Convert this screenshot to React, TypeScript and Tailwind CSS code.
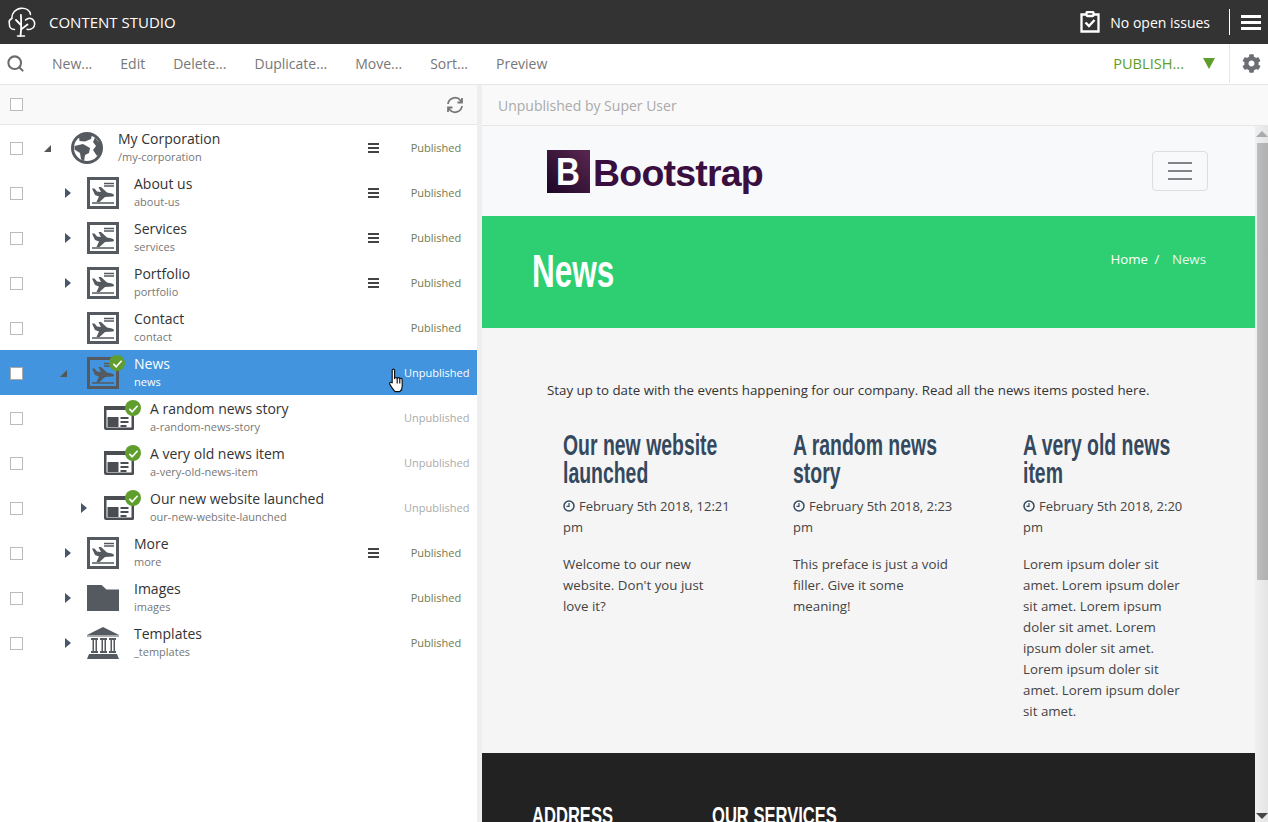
import React from 'react';
import { Search } from 'lucide-react';
import { FaCog } from 'react-icons/fa';

type RowKind = 'site' | 'globe' | 'article' | 'folder' | 'templates';

type Row = {
  name: string;
  path: string;
  level: number;
  kind: RowKind;
  expander?: 'open' | 'closed';
  menu?: boolean;
  status: 'Published' | 'Unpublished';
  badge?: boolean;
  selected?: boolean;
};

const rows: Row[] = [
  { name: 'My Corporation', path: '/my-corporation', level: 0, kind: 'globe', expander: 'open', menu: true, status: 'Published' },
  { name: 'About us', path: 'about-us', level: 1, kind: 'site', expander: 'closed', menu: true, status: 'Published' },
  { name: 'Services', path: 'services', level: 1, kind: 'site', expander: 'closed', menu: true, status: 'Published' },
  { name: 'Portfolio', path: 'portfolio', level: 1, kind: 'site', expander: 'closed', menu: true, status: 'Published' },
  { name: 'Contact', path: 'contact', level: 1, kind: 'site', status: 'Published' },
  { name: 'News', path: 'news', level: 1, kind: 'site', expander: 'open', status: 'Unpublished', badge: true, selected: true },
  { name: 'A random news story', path: 'a-random-news-story', level: 2, kind: 'article', status: 'Unpublished', badge: true },
  { name: 'A very old news item', path: 'a-very-old-news-item', level: 2, kind: 'article', status: 'Unpublished', badge: true },
  { name: 'Our new website launched', path: 'our-new-website-launched', level: 2, kind: 'article', expander: 'closed', status: 'Unpublished', badge: true },
  { name: 'More', path: 'more', level: 1, kind: 'site', expander: 'closed', menu: true, status: 'Published' },
  { name: 'Images', path: 'images', level: 1, kind: 'folder', expander: 'closed', status: 'Published' },
  { name: 'Templates', path: '_templates', level: 1, kind: 'templates', expander: 'closed', status: 'Published' },
];

const posts = [
  {
    title: 'Our new website launched',
    date: 'February 5th 2018, 12:21 pm',
    body: "Welcome to our new website. Don't you just love it?",
  },
  {
    title: 'A random news story',
    date: 'February 5th 2018, 2:23 pm',
    body: 'This preface is just a void filler. Give it some meaning!',
  },
  {
    title: 'A very old news item',
    date: 'February 5th 2018, 2:20 pm',
    body: 'Lorem ipsum doler sit amet. Lorem ipsum doler sit amet. Lorem ipsum doler sit amet. Lorem ipsum doler sit amet. Lorem ipsum doler sit amet. Lorem ipsum doler sit amet.',
  },
];

const TreeLogo = () => (
  <svg width="28" height="30" viewBox="0 0 28 30" fill="none" stroke="white" strokeWidth="1.500" strokeLinecap="round" strokeLinejoin="round">
    <path d="M6.500 22.500C3 22.500 1 20 1.500 17 .8 15 1.500 12.500 4 11.500 3.500 6.500 7.500 1.500 13.500 1.200c5-.2 8.500 2.500 9 6.300" />
    <path d="M17.500 13c2.500-2.500 6-2.500 7.800 0 2 2.500 1.800 6-.5 8-1.600 1.300-3.700 1.700-5.800 1.200" />
    <path d="M12.500 29c.8-6 .8-14 .4-21M12.900 18L8 13M13 22.500L19.500 17.500" strokeWidth="1.800" />
    <path d="M9.500 29h7" />
  </svg>
);

const ClipboardIcon = () => (
  <svg width="20" height="22" viewBox="0 0 20 22" fill="none" stroke="white" strokeWidth="2.300">
    <path d="M6 3.500H1.500v17h17v-17H14" />
    <rect x="6.500" y="1" width="7" height="4" rx="1" />
    <path d="M5.500 11.500l3.500 3.500 5.500-6" strokeWidth="2.400" />
  </svg>
);

const SiteIcon = () => (
  <svg width="32" height="32" viewBox="0 0 32 32" fill="none">
    <rect x="1.500" y="1.500" width="29" height="29" stroke="#555960" strokeWidth="3" />
    <path d="M17 6.500h10M17 9h10M5 26h22" stroke="#555960" strokeWidth="1.300" />
    <path d="M5 11.500L7.500 11.500 10 14.500 14 15 11.500 10H14L20 15.500 25 16.500Q28.500 18 26 19.500L18 20 12.500 25H9.500L12 19.500 8 18Z" fill="#555960" />
  </svg>
);

const GlobeIcon = () => (
  <svg width="32" height="32" viewBox="0 0 32 32" fill="#555960">
    <circle cx="16" cy="16" r="14.500" fill="white" stroke="#555960" strokeWidth="3" />
    <path d="M8 4.500L16 2l5 1-1 4-6 2.500L8.500 9Z" />
    <path d="M3.500 14L12 12l7 4-1 5-4 2-1 6.500-3-2.500-1-6-5.500-3.500Z" />
    <path d="M24 5.500L30 13v7l-4 4-4-6 3-4-3-4Z" />
  </svg>
);

const ArticleIcon = () => (
  <svg width="32" height="32" viewBox="0 0 32 32" fill="none">
    <path d="M1 4h30v22.500a1.500 1.500 0 0 1-1.500 1.500H3a2 2 0 0 1-2-2Z" fill="#4a4d52" />
    <rect x="3.500" y="8" width="25" height="17.500" fill="white" />
    <rect x="4.500" y="15" width="11" height="10" fill="#4a4d52" />
    <path d="M17.500 16h8M17.500 20h8M17.500 24h6" stroke="#4a4d52" strokeWidth="1.800" />
  </svg>
);

const FolderIcon = () => (
  <svg width="32" height="32" viewBox="0 0 32 32">
    <path d="M0 3h14.500L19.500 7.500H32V29H0Z" fill="#555960" />
  </svg>
);

const TemplatesIcon = () => (
  <svg width="34" height="32" viewBox="0 0 34 32" fill="#555960" className="-ml-[1px]">
    <path d="M17 0L33 8H1Z" />
    <path d="M1 9h32" stroke="#555960" strokeWidth="1" />
    <path d="M5 11h7v2H5ZM14 11h7v2h-7ZM23 11h7v2h-7ZM5 24h7v2H5ZM14 24h7v2h-7ZM23 24h7v2h-7Z" />
    <path d="M6.500 13h1.500v11H6.500ZM9.500 13h1.500v11H9.500ZM15.500 13h1.500v11h-1.500ZM18.500 13h1.500v11h-1.500ZM24.500 13h1.500v11h-1.500ZM27.500 13h1.500v11h-1.500Z" />
    <path d="M3 27h28l2 5H1Z" />
  </svg>
);

const Badge = () => (
  <span className="absolute -top-[2px] -right-[6px] flex h-[16px] w-[16px] items-center justify-center rounded-full bg-[#5f9e2c]">
    <svg width="11" height="11" viewBox="0 0 12 12" fill="none" stroke="white" strokeWidth="1.800">
      <path d="M1.500 6.500L4.500 9.500 10.500 3" />
    </svg>
  </span>
);

const HandCursor = () => (
  <svg className="absolute left-[387px] top-[18px]" width="20" height="26" viewBox="0 0 18 27" fill="white" stroke="#111" strokeWidth="1.200" strokeLinejoin="round">
    <path d="M4 2.500C4 .8 6.500 .8 6.500 2.500V11c.3-1.500 2.500-1.500 2.700 0 .3-1.300 2.500-1.300 2.700.3.400-1 2.400-.8 2.500 .7v7c0 2.500-1 4.500-2.400 5.500H7C5.500 23 3.500 20.500 1.500 17c-.8-1.800 1-3 2.500-1.500Z" />
    <path d="M9.200 11v5M11.900 11.500V16" fill="none" />
  </svg>
);

function RowIcon({ kind }: { kind: RowKind }) {
  if (kind === 'globe') return <GlobeIcon />;
  if (kind === 'article') return <ArticleIcon />;
  if (kind === 'folder') return <FolderIcon />;
  if (kind === 'templates') return <TemplatesIcon />;
  return <SiteIcon />;
}

function TreeRow({ row }: { row: Row }) {
  const indent = row.level === 0 ? 'pl-[8px]' : row.level === 1 ? 'pl-[24px]' : 'pl-[40px]';
  return (
    <div className={`relative flex h-[45px] items-center pt-[1px] ${row.selected ? 'bg-[#4294de]' : 'bg-white'}`}>
      <div className="flex w-[33px] shrink-0 justify-start pl-[10px]">
        <span className={`block h-[13px] w-[13px] border ${row.selected ? 'border-[#aaa] bg-white' : 'border-[#bbb] bg-white'}`} />
      </div>
      <div className={`flex min-w-0 flex-1 items-center ${indent}`}>
        <span className="flex w-[30px] shrink-0 items-center justify-start">
          {row.expander === 'closed' && (
            <span className="ml-[8px] block h-0 w-0 border-y-[5px] border-l-[6px] border-y-transparent border-l-[#47566a]" />
          )}
          {row.expander === 'open' && (
            <span className="ml-[3px] mt-[1px] block h-0 w-0 border-b-[7px] border-l-[7px] border-b-[#555] border-l-transparent" />
          )}
        </span>
        <span className="relative h-[32px] w-[32px] shrink-0">
          <RowIcon kind={row.kind} />
          {row.badge && <Badge />}
        </span>
        <div className="ml-[15px] min-w-0 flex-1 pb-[2px]">
          <div className={`text-[14px] leading-[19px] ${row.selected ? 'text-white' : 'text-[#333]'}`}>{row.name}</div>
          <div className={`text-[11px] leading-[17px] ${row.selected ? 'text-white' : 'text-[#777]'}`}>{row.path}</div>
        </div>
      </div>
      {row.menu && (
        <span className="mr-[25px] flex w-[11px] flex-col gap-[2px]">
          <span className="h-[2px] bg-[#444]" />
          <span className="h-[2px] bg-[#444]" />
          <span className="h-[2px] bg-[#444]" />
        </span>
      )}
      <span
        className={`mr-[9px] w-[64px] text-center text-[11px] ${
          row.selected ? 'text-white' : row.status === 'Published' ? 'text-[#6f7c4d]' : 'text-[#aaa]'
        }`}
      >
        {row.status}
      </span>
      {row.selected && <HandCursor />}
    </div>
  );
}

function Toolbar() {
  return (
    <div className="flex h-[41px] shrink-0 items-center border-b border-[#e6e6e6] bg-white pb-[1px] text-[14px] text-[#777]">
      <Search size={19} strokeWidth={2.6} color="#6b6b6b" className="ml-[6px]" />
      <div className="ml-[27px] flex gap-[28px]">
        <span>New...</span>
        <span>Edit</span>
        <span>Delete...</span>
        <span>Duplicate...</span>
        <span>Move...</span>
        <span>Sort...</span>
        <span>Preview</span>
      </div>
      <span className="ml-auto text-[14.600px] text-[#609e24]">PUBLISH...</span>
      <span className="ml-[19px] block h-0 w-0 border-x-[6px] border-t-[11px] border-x-transparent border-t-[#5f9e2c]" />
      <div className="ml-[14px] flex h-full w-[39px] items-center justify-center border-l border-[#e6e6e6] pl-[5px]">
        <FaCog size={19} color="#6b6e73" />
      </div>
    </div>
  );
}

function Scrollbar() {
  return (
    <div className="flex w-[13px] shrink-0 flex-col items-center bg-gradient-to-r from-[#f0f0f0] to-[#e4e4e4]">
      <span className="mt-[5px] block h-0 w-0 border-x-[6px] border-b-[6px] border-x-transparent border-b-[#aaa]" />
      <span className="ml-[2px] mt-[6px] block h-[437px] w-[11px] bg-gradient-to-r from-[#bdbdbd] to-[#b0b0b0]" />
      <span className="mb-[3px] mt-auto block h-0 w-0 border-x-[6px] border-t-[6px] border-x-transparent border-t-[#444]" />
    </div>
  );
}

function PreviewPage() {
  const heading = "origin-left font-['Liberation_Sans',sans-serif] font-bold";
  return (
    <div className="min-w-0 flex-1 overflow-hidden">
      <div className="flex h-[90px] items-center bg-[#f8f9fa] pl-[65px] pr-[47px]">
        <div className="flex items-center font-['Liberation_Sans',sans-serif] font-bold">
          <span className="flex h-[43px] w-[43px] items-center justify-center bg-gradient-to-tr from-[#1d0725] to-[#5b2752] text-white">
            <span className="inline-block scale-x-[.85] text-[39px] leading-none">B</span>
          </span>
          <span className="ml-[3px] mt-[6px] text-[37.500px] leading-none tracking-[-0.8px] text-[#3a0f3f]">Bootstrap</span>
        </div>
        <div className="ml-auto flex h-[40px] w-[56px] flex-col items-center justify-center gap-[6px] rounded border border-[#dcdee0]">
          <span className="h-[2px] w-[24px] bg-[#808488]" />
          <span className="h-[2px] w-[24px] bg-[#808488]" />
          <span className="h-[2px] w-[24px] bg-[#808488]" />
        </div>
      </div>
      <div className="flex h-[112px] items-start justify-between bg-[#2ecf73] pl-[50px] pr-[49px] text-white">
        <h1 className={`${heading} mt-[26px] scale-x-[.67] text-[47px] leading-[58px]`}>News</h1>
        <div className="mt-[34px] text-[13.300px] leading-[18px]">
          Home <span className="mx-[3px]">/</span> <span className="ml-[6px] text-[#e3f7ea]">News</span>
        </div>
      </div>
      <div className="h-[425px] bg-[#f5f5f5] px-[65px] pt-[52px] text-[13.300px] text-[#333]">
        <p className="leading-[20px]">Stay up to date with the events happening for our company. Read all the news items posted here.</p>
        <div className="mt-[31px] grid grid-cols-[repeat(3,230px)] pl-[16px]">
          {posts.map((post) => (
            <div key={post.title} className="w-[164px]">
              <h2 className={`${heading} w-[254px] scale-x-[.67] text-[29px] leading-[28px] text-[#34495e]`}>{post.title}</h2>
              <p className="mt-[9px] w-[172px] text-[13px] leading-[21px] text-[#444]">
                <svg className="mr-[4px] inline-block align-[-1px]" width="12" height="12" viewBox="0 0 12 12" fill="none" stroke="#34495e" strokeWidth="1.500">
                  <circle cx="6" cy="6" r="5" />
                  <path d="M6 3v3.300H3.500" strokeWidth="1.200" />
                </svg>
                {post.date}
              </p>
              <p className="mt-[16px] leading-[21px] text-[#444]">{post.body}</p>
            </div>
          ))}
        </div>
      </div>
      <div className="flex h-[200px] bg-[#222] pl-[50px] pt-[48px] text-white">
        <span className={`${heading} w-[180px] scale-x-[.69] text-[24px] leading-[30px]`}>ADDRESS</span>
        <span className={`${heading} w-[250px] scale-x-[.69] text-[24px] leading-[30px]`}>OUR SERVICES</span>
      </div>
    </div>
  );
}

export default function App() {
  return (
    <div className="flex h-[822px] w-full flex-col overflow-hidden bg-white font-['Open_Sans',sans-serif]">
      {/* App bar */}
      <div className="flex h-[44px] shrink-0 items-center bg-[#333] text-[14px] text-white">
        <span className="ml-[8px]"><TreeLogo /></span>
        <span className="ml-[13px] text-[15px]">CONTENT STUDIO</span>
        <span className="ml-auto"><ClipboardIcon /></span>
        <span className="ml-[10px]">No open issues</span>
        <span className="ml-[19px] h-[26px] w-px bg-white" />
        <span className="ml-[11px] mr-[7px] flex w-[20px] flex-col gap-[3px]">
          <span className="h-[3px] bg-white" />
          <span className="h-[3px] bg-white" />
          <span className="h-[3px] bg-white" />
        </span>
      </div>

      <Toolbar />

      <div className="flex min-h-0 flex-1">
        {/* Content tree */}
        <div className="w-[477px] shrink-0">
          <div className="flex h-[40px] items-center border-b border-[#e6e6e6] bg-[#f9f9f9] pl-[10px] pr-[13px]">
            <span className="block h-[13px] w-[13px] border border-[#bbb] bg-white" />
            <svg className="ml-auto" width="18" height="18" viewBox="0 0 18 18" fill="none" stroke="#777" strokeWidth="1.800">
              <path d="M2 8a7 7 0 0 1 12.500-3.500L16 6.500M16 2v4.500h-4.500M16 10a7 7 0 0 1-12.500 3.500L2 11.500M2 16v-4.500h4.500" />
            </svg>
          </div>
          {rows.map((row) => (
            <TreeRow key={row.path} row={row} />
          ))}
        </div>

        {/* Splitter */}
        <div className="w-[5px] shrink-0 bg-[#eeeeee]" />

        {/* Preview */}
        <div className="flex min-w-0 flex-1 flex-col">
          <div className="flex h-[41px] shrink-0 items-center border-b border-[#e6e6e6] bg-[#f9f9f9] pl-[16px] text-[14px] text-[#aaa]">
            Unpublished by Super User
          </div>
          <div className="flex min-h-0 flex-1">
            <PreviewPage />
            <Scrollbar />
          </div>
        </div>
      </div>
    </div>
  );
}
